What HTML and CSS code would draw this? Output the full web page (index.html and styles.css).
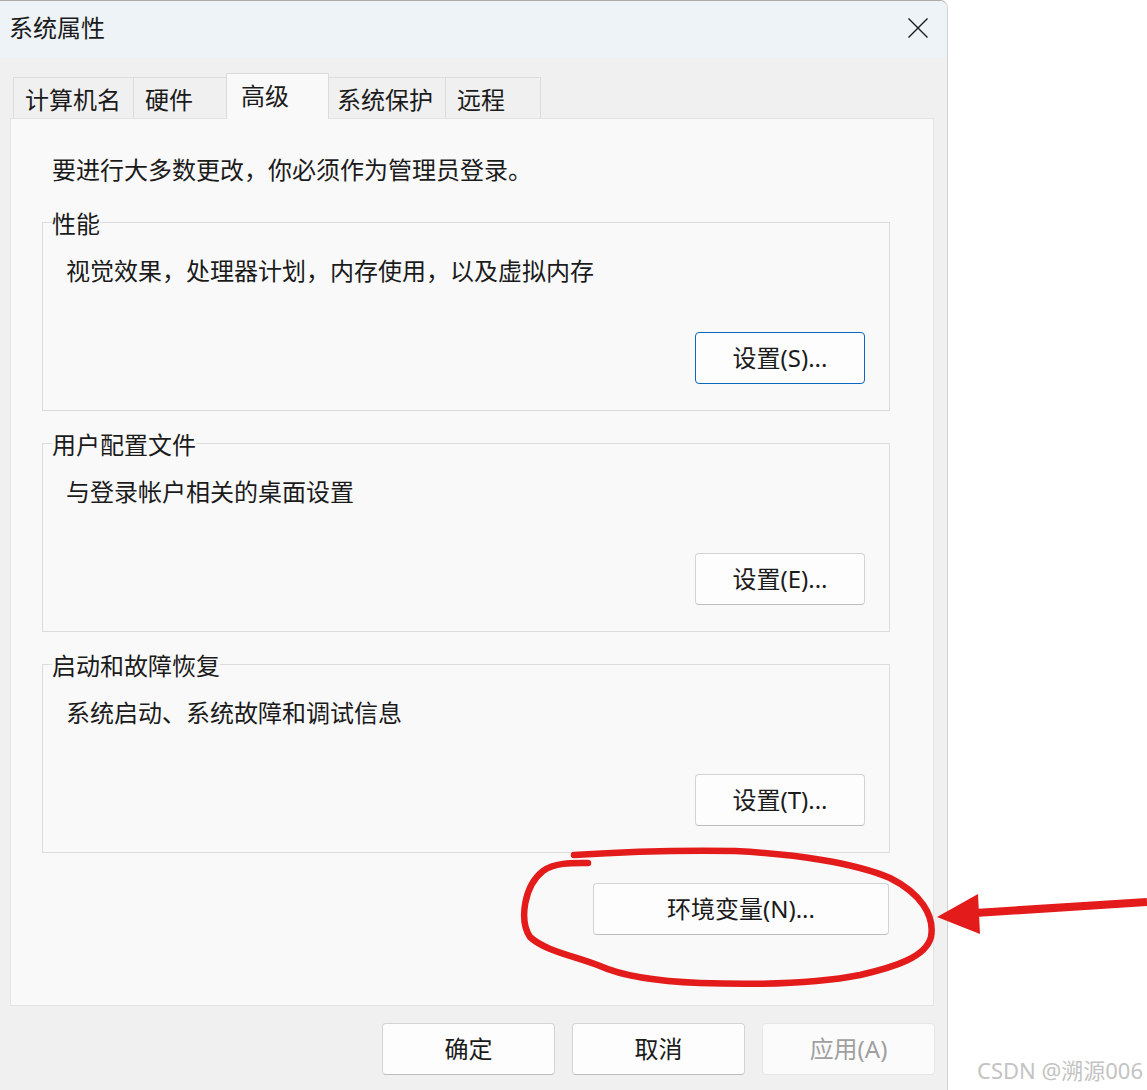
FILE: index.html
```html
<!DOCTYPE html>
<html lang="zh-CN">
<head>
  <meta charset="UTF-8">
  <title>系统属性</title>
  <link rel="stylesheet" href="styles.css">
</head>
<body>

<div class="screen">
  <div class="window">
    <div class="titlebar">
      <span class="title">系统属性</span>
      <button class="close" aria-label="关闭">
        <svg width="20" height="20" viewBox="0 0 20 20">
          <path d="M0.5 0.5 L19.5 19.5 M19.5 0.5 L0.5 19.5" stroke="#1b1b1b" stroke-width="1.4" fill="none"/>
        </svg>
      </button>
    </div>

    <div class="tabs">
      <div class="tab tab-name">计算机名</div>
      <div class="tab tab-hw">硬件</div>
      <div class="tab tab-adv active">高级</div>
      <div class="tab tab-prot">系统保护</div>
      <div class="tab tab-remote">远程</div>
    </div>

    <div class="panel">
      <p class="intro">要进行大多数更改，你必须作为管理员登录。</p>

      <fieldset class="group">
        <legend>性能</legend>
        <p class="desc">视觉效果，处理器计划，内存使用，以及虚拟内存</p>
        <div class="row">
          <button class="btn btn-setting default">设置(S)...</button>
        </div>
      </fieldset>

      <fieldset class="group">
        <legend>用户配置文件</legend>
        <p class="desc">与登录帐户相关的桌面设置</p>
        <div class="row">
          <button class="btn btn-setting">设置(E)...</button>
        </div>
      </fieldset>

      <fieldset class="group">
        <legend>启动和故障恢复</legend>
        <p class="desc">系统启动、系统故障和调试信息</p>
        <div class="row">
          <button class="btn btn-setting">设置(T)...</button>
        </div>
      </fieldset>

      <div class="row env-row">
        <button class="btn btn-env">环境变量(N)...</button>
      </div>
    </div>

    <div class="footer">
      <button class="btn btn-footer">确定</button>
      <button class="btn btn-footer">取消</button>
      <button class="btn btn-footer" disabled>应用(A)</button>
    </div>
  </div>

  <div class="outside">
    <span class="watermark">CSDN @溯源006</span>
  </div>

  <!-- red hand-drawn marks over the screenshot -->
  <svg class="annotation" width="1147" height="1090" viewBox="0 0 1147 1090">
    <path d="M574 855
             C 620 852, 680 850, 735 851
             C 795 854, 855 863, 890 878
             C 920 893, 935 915, 931 937
             C 926 957, 895 967, 860 975
             C 820 983, 760 985, 700 983
             C 650 981, 620 975, 600 966
             C 575 956, 545 951, 530 937
             C 519 920, 524 886, 543 871
             C 555 862, 575 863, 588 863"
          fill="none" stroke="#e31b1b" stroke-width="6.5" stroke-linecap="round" stroke-linejoin="round"/>
    <path d="M1147 902 L975 913" stroke="#e31b1b" stroke-width="8" fill="none"/>
    <polygon points="937,917 978,894 980,934" fill="#e31b1b"/>
  </svg>
</div>

</body>
</html>
```

FILE: styles.css
```css
body {
  margin: 0;
  background: #fff;
  font-family: "Noto Sans", "Noto Sans CJK SC", sans-serif;
  color: #1b1b1b;
}
.screen {
  position: relative;
  display: flex;
  width: 1147px;
  height: 1090px;
  overflow: hidden;
}
.window {
  width: 948px;
  height: 1090px;
  box-sizing: border-box;
  background: #f0f0f0;
  border-top: 1px solid #ababab;
  border-right: 1px solid #d2d2d2;
  border-top-right-radius: 8px;
  overflow: hidden;
}
.titlebar {
  height: 56px;
  display: flex;
  align-items: center;
  padding-left: 9px;
  padding-bottom: 2px;
  box-sizing: border-box;
  background: #eef3f7;
}
.title {
  font-size: 24px;
  line-height: 24px;
}
.close {
  margin-left: auto;
  margin-right: 19px;
  padding: 0;
  border: none;
  background: none;
  display: flex;
}

/* tabs */
.tabs {
  display: flex;
  align-items: flex-end;
  padding: 16px 0 0 13px;
}
.tab {
  height: 41px;
  box-sizing: border-box;
  border: 1px solid #dcdcdc;
  border-bottom: none;
  margin-left: -1px;
  padding: 10px 0 0 11px;
  font-size: 24px;
  line-height: 24px;
  background: #f0f0f0;
  white-space: nowrap;
}
.tab-name {
  margin-left: 0;
  width: 121px;
}
.tab-hw {
  width: 94px;
}
.tab-adv {
  width: 103px;
  padding-left: 14px;
}
.tab-prot {
  width: 118px;
  padding-left: 8px;
}
.tab-remote {
  width: 96px;
}
.tab.active {
  position: relative;
  z-index: 1;
  height: 46px;
  margin-bottom: -1px;
  background: #f9f9f9;
}

/* main panel */
.panel {
  margin-left: 10px;
  width: 924px;
  height: 888px;
  box-sizing: border-box;
  border: 1px solid #e3e3e3;
  background: #f9f9f9;
  padding: 39px 43px 0 31px;
}
.intro {
  margin: 0 0 0 10px;
  font-size: 24px;
  line-height: 24px;
}
.group {
  margin: 18px 0 0;
  padding: 0 24px 26px 9px;
  border: 1px solid #dcdcdc;
  min-width: 0;
}
.intro + .group {
  margin-top: 26px;
}
.group legend {
  padding: 4px 0 0;
  font-size: 24px;
  line-height: 24px;
}
.desc {
  margin: 23px 0 0 14px;
  font-size: 24px;
  line-height: 24px;
}
.row {
  display: flex;
  justify-content: flex-end;
  margin-top: 49px;
}
.env-row {
  margin-top: 30px;
  margin-right: 1px;
}

/* buttons */
.btn {
  height: 52px;
  box-sizing: border-box;
  background: #fdfdfd;
  border: 1px solid #d3d3d3;
  border-bottom-color: #bdbdbd;
  border-radius: 4px;
  font-family: "Noto Sans", "Noto Sans CJK SC", sans-serif;
  font-size: 24px;
  line-height: 24px;
  color: #1b1b1b;
  padding: 0;
}
.btn.default {
  border-color: #0a67c2;
}
.btn-setting {
  width: 170px;
}
.btn-env {
  width: 296px;
}
.btn:disabled {
  background: #fbfbfb;
  border-color: #e6e6e6;
  color: #a0a0a0;
}

.footer {
  display: flex;
  justify-content: flex-end;
  gap: 17px;
  padding: 17px 12px 0 0;
}
.btn-footer {
  width: 173px;
}

/* right side outside the dialog */
.outside {
  flex: 1;
  display: flex;
  align-items: flex-end;
  justify-content: flex-end;
  padding: 0 4px 7px 0;
}
.watermark {
  font-size: 22px;
  line-height: 26px;
  color: #c3c3c3;
  white-space: nowrap;
}

.annotation {
  position: absolute;
  left: 0;
  top: 0;
  pointer-events: none;
}
```
